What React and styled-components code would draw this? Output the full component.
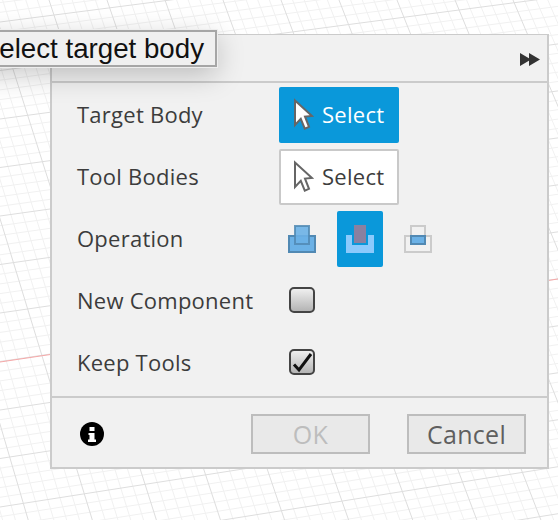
import React from "react";
import styled, { createGlobalStyle } from "styled-components";

const Global = createGlobalStyle`
  html, body { margin: 0; padding: 0; background: #fff; }
  #root { width: 558px; height: 520px; }
`;

const Page = styled.div`
  position: relative;
  width: 558px;
  height: 520px;
  overflow: hidden;
  background: #fff;
  padding: 34px 0 0 50px;
  box-sizing: border-box;
  font-family: "Open Sans", "Noto Sans", sans-serif;
`;
const CanvasSvg = styled.svg`
  position: absolute;
  inset: 0;
`;
const Dialog = styled.div`
  position: relative;
  width: 499px;
  height: 435px;
  box-sizing: border-box;
  background: #f1f1f1;
  border: 2px solid #cbcbcb;
  border-top-width: 1px;
  display: flex;
  flex-direction: column;
`;
const TitleBar = styled.div`
  height: 46px;
  flex: none;
  box-sizing: content-box;
  border-bottom: 2px solid #cbcbcb;
  display: flex;
  align-items: flex-end;
  justify-content: space-between;
  padding: 0 7px 0 26px;
`;
const TitleIcon = styled.svg`
  margin-bottom: 14px;
`;
const Chevrons = styled.svg`
  margin-bottom: 15px;
`;
const Body = styled.div`
  flex: 1;
  display: flex;
  flex-direction: column;
  padding: 1px 0 0 25px;
`;
const Row = styled.div`
  height: 62px;
  flex: none;
  display: grid;
  grid-template-columns: 202px 1fr;
  align-items: center;
`;
const Label = styled.div`
  font-size: 22px;
  color: #3c3c3c;
  letter-spacing: 0.25px;
  white-space: nowrap;
  padding-bottom: 2px;
`;
const SelectButton = styled.div`
  width: 120px;
  height: 56px;
  box-sizing: border-box;
  border-radius: 2px;
  display: flex;
  align-items: center;
  gap: 8px;
  padding-bottom: 2px;
  font-size: 22px;
  letter-spacing: 0.3px;
  background: ${p => (p.$active ? "#0a98da" : "#fff")};
  color: ${p => (p.$active ? "#fff" : "#3c3c3c")};
  border: ${p => (p.$active ? "none" : "2px solid #c9c9c9")};
  padding-left: ${p => (p.$active ? "15px" : "13px")};
`;
const OpGroup = styled.div`
  display: flex;
  align-items: center;
  gap: 12px;
`;
const OpButton = styled.div`
  width: 46px;
  height: 56px;
  border-radius: 2px;
  display: flex;
  align-items: center;
  justify-content: center;
  background: ${p => (p.$active ? "#0a98da" : "transparent")};
`;
const CheckCell = styled.div`
  padding: 0 0 2px 10px;
  display: flex;
`;
const Check = styled.div`
  width: 26px;
  height: 26px;
  box-sizing: border-box;
  border: 2px solid #444;
  border-radius: 5px;
  background: linear-gradient(#efefef, #b4b4b4);
  display: flex;
  align-items: center;
  justify-content: center;
`;
const Footer = styled.div`
  height: 71px;
  flex: none;
  border-top: 2px solid #cbcbcb;
  display: flex;
  align-items: center;
  padding: 3px 21px 0 28px;
  gap: 37px;
  box-sizing: border-box;
`;
const InfoWrap = styled.div`
  margin-right: auto;
  display: flex;
`;
const FootButton = styled.div`
  width: 119px;
  height: 40px;
  box-sizing: border-box;
  border: 2px solid #bdbdbd;
  background: #e9e9e9;
  display: flex;
  align-items: center;
  justify-content: center;
  font-size: 25px;
  letter-spacing: 0.3px;
  color: ${p => (p.$disabled ? "#bdbdbd" : "#5f5f5f")};
`;
const Tooltip = styled.div`
  position: absolute;
  left: -60px;
  top: 30px;
  width: 277px;
  height: 37px;
  box-sizing: border-box;
  background: #f0f0f0;
  border: 2px solid #a6a6a6;
  outline: 1px solid #eee;
  box-shadow: 0 8px 28px rgba(0, 0, 0, 0.22);
  padding-right: 11px;
  display: flex;
  align-items: center;
  justify-content: flex-end;
  font-family: "Liberation Sans", Arial, sans-serif;
  font-size: 27.7px;
  color: #111;
  white-space: nowrap;
`;

function Grid() {
  const minor = [];
  const major = [];
  const w = 558, h = 520;
  for (let n = -60; n < 260; n++) {
    const k = n / 5;
    const xt = 513 - 58 * k;
    const xb = 712 - 63.5 * k;
    const x2 = xt + ((xb - xt) * h) / 470;
    const line = <line key={"v" + n} x1={xt} y1={0} x2={x2} y2={h} />;
    (n % 5 === 0 ? major : minor).push(line);
  }
  for (let n = -30; n < 120; n++) {
    const j = n / 5;
    const yl = 70.5 + 48.5 * j;
    const yr = -2 + 47 * j;
    const y2 = yl + ((yr - yl) * w) / 550;
    const line = <line key={"h" + n} x1={0} y1={yl} x2={w} y2={y2} />;
    (n % 5 === 0 ? major : minor).push(line);
  }
  return (
    <CanvasSvg width={w} height={h}>
      <g stroke="#f1f1f1" strokeWidth="1">{minor}</g>
      <g stroke="#dedede" strokeWidth="1">{major}</g>
      <line x1="0" y1="362" x2="558" y2="279" stroke="#f6a8a8" strokeWidth="1" />
    </CanvasSvg>
  );
}

function Cursor() {
  return (
    <svg width="20" height="32" viewBox="0 0 20 32">
      <path
        d="M1 2.5 V27 L6.8 20.8 L10.8 30.6 L15 28.8 L11 18.6 L18 18 Z"
        fill="#fff"
        stroke="#666"
        strokeWidth="2"
      />
    </svg>
  );
}

function OpIcon({ kind }) {
  if (kind === "join") {
    return (
      <svg width="28" height="28" viewBox="0 0 28 28">
        <rect x="1" y="11" width="26" height="16" fill="#6bb1e6" stroke="#5189b3" strokeWidth="2" />
        <rect x="7" y="1" width="14" height="18" fill="#6bb1e6" fillOpacity="0.9" stroke="#5189b3" strokeOpacity="0.85" strokeWidth="2" />
      </svg>
    );
  }
  if (kind === "cut") {
    return (
      <svg width="28" height="28" viewBox="0 0 28 28">
        <path d="M0 10 H6 V20 H22 V10 H28 V28 H0 Z" fill="#8ccafc" />
        <rect x="8" y="0" width="12" height="18" fill="#8a80a0" />
      </svg>
    );
  }
  return (
    <svg width="28" height="28" viewBox="0 0 28 28">
      <rect x="1" y="11" width="26" height="16" fill="none" stroke="#cbcbcb" strokeWidth="2" />
      <rect x="7" y="1" width="14" height="18" fill="none" stroke="#cbcbcb" strokeWidth="2" />
      <rect x="7" y="11" width="14" height="8" fill="#6bb1e6" stroke="#5189b3" strokeWidth="2" />
    </svg>
  );
}

export default function App() {
  return (
    <Page>
      <Global />
      <Grid />
      <Dialog>
        <TitleBar>
          <TitleIcon width="10" height="10" viewBox="0 0 10 10">
            <rect x="0" y="2" width="10" height="8" rx="1" fill="#555" />
          </TitleIcon>
          <Chevrons width="20" height="13" viewBox="0 0 20 13">
            <path d="M0 0 L11 6.5 L0 13 Z M9 0 L20 6.5 L9 13 Z" fill="#333" />
          </Chevrons>
        </TitleBar>
        <Body>
          <Row>
            <Label>Target Body</Label>
            <SelectButton $active><Cursor />Select</SelectButton>
          </Row>
          <Row>
            <Label>Tool Bodies</Label>
            <SelectButton><Cursor />Select</SelectButton>
          </Row>
          <Row>
            <Label>Operation</Label>
            <OpGroup>
              <OpButton><OpIcon kind="join" /></OpButton>
              <OpButton $active><OpIcon kind="cut" /></OpButton>
              <OpButton><OpIcon kind="intersect" /></OpButton>
            </OpGroup>
          </Row>
          <Row>
            <Label>New Component</Label>
            <CheckCell><Check /></CheckCell>
          </Row>
          <Row>
            <Label>Keep Tools</Label>
            <CheckCell>
              <Check>
                <svg width="22" height="22" viewBox="0 0 22 22">
                  <path d="M3 13.5 L8 19 L20 3" fill="none" stroke="#111" strokeWidth="3" />
                </svg>
              </Check>
            </CheckCell>
          </Row>
        </Body>
        <Footer>
          <InfoWrap>
            <svg width="24" height="24" viewBox="0 0 24 24">
              <circle cx="12" cy="12" r="12" fill="#000" />
              <rect x="9.5" y="5" width="5" height="4" fill="#fff" />
              <path d="M8.5 11 H14.5 V17.5 H16 V20 H8 V17.5 H9.5 V13 H8.5 Z" fill="#fff" />
            </svg>
          </InfoWrap>
          <FootButton $disabled>OK</FootButton>
          <FootButton>Cancel</FootButton>
        </Footer>
      </Dialog>
      <Tooltip>Select target body</Tooltip>
    </Page>
  );
}
